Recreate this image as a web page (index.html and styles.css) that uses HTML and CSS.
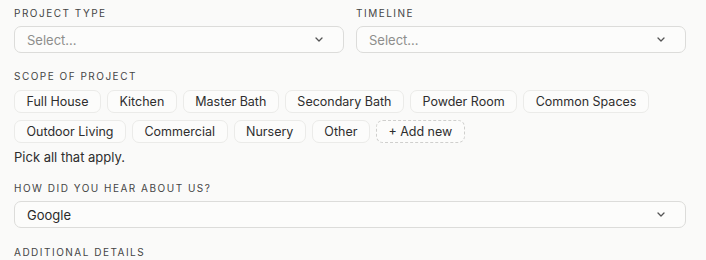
FILE: index.html
```html
<!DOCTYPE html>
<html>
<head>
<meta charset="utf-8">
<link rel="stylesheet" href="styles.css">
</head>
<body>
<div class="form">
  <div class="row2">
    <div class="field">
      <div class="label">Project Type</div>
      <div class="select placeholder"><span>Select...</span><svg class="chev" width="8" height="5" viewBox="0 0 8 5"><path d="M1 1l3 3 3-3" fill="none" stroke="#555" stroke-width="1.3" stroke-linecap="round" stroke-linejoin="round"/></svg></div>
    </div>
    <div class="field">
      <div class="label">Timeline</div>
      <div class="select placeholder"><span>Select...</span><svg class="chev" width="8" height="5" viewBox="0 0 8 5"><path d="M1 1l3 3 3-3" fill="none" stroke="#555" stroke-width="1.3" stroke-linecap="round" stroke-linejoin="round"/></svg></div>
    </div>
  </div>

  <div class="label sec">Scope of Project</div>
  <div class="chips">
    <span class="chip">Full House</span>
    <span class="chip">Kitchen</span>
    <span class="chip">Master Bath</span>
    <span class="chip">Secondary Bath</span>
    <span class="chip">Powder Room</span>
    <span class="chip">Common Spaces</span>
    <span class="chip">Outdoor Living</span>
    <span class="chip">Commercial</span>
    <span class="chip">Nursery</span>
    <span class="chip">Other</span>
    <span class="chip add">+ Add new</span>
  </div>
  <div class="hint">Pick all that apply.</div>

  <div class="label sec2">How did you hear about us?</div>
  <div class="select"><span>Google</span><svg class="chev" width="8" height="5" viewBox="0 0 8 5"><path d="M1 1l3 3 3-3" fill="none" stroke="#555" stroke-width="1.3" stroke-linecap="round" stroke-linejoin="round"/></svg></div>

  <div class="label sec3">Additional Details</div>
</div>
</body>
</html>
```
FILE: styles.css
```css
* { box-sizing: border-box; }
html, body { margin: 0; padding: 0; background: #fafaf9; }
body { font-family: Inter, "Noto Sans", sans-serif; color: #2a2a2a; }
.form { width: 672px; margin-left: 14px; padding-top: 6px; }
.row2 { display: grid; grid-template-columns: 1fr 1fr; gap: 12px; }
.label {
  font-size: 10px; line-height: 14px; letter-spacing: 1.5px;
  text-transform: uppercase; color: #454545; margin-bottom: 6px;
}
.label.sec { margin-top: 16px; margin-bottom: 7px; }
.label.sec2 { margin-top: 16px; }
.label.sec3 { margin-top: 17px; }
.select {
  height: 27px; border: 1px solid #dcdcda; border-radius: 7px;
  background: #fcfcfb; display: flex; align-items: center;
  justify-content: space-between; padding: 0 20px 0 12px;
  font-size: 13px; color: #2a2a2a;
}
.select.placeholder { color: #8e8e8c; }
.chev { display: block; }
.chips { display: flex; flex-wrap: wrap; gap: 7px 6px; }
.chip {
  height: 23px; display: inline-flex; align-items: center;
  padding: 0 11.5px; border: 1px solid #ebebe9; border-radius: 7px;
  background: #fcfcfb; font-size: 12.5px; color: #2e2e2e;
}
.chip.add { border: 1px dashed #cfcfcd; }
.hint { font-size: 13px; line-height: 16px; margin-top: 6px; color: #2e2e2e; }
```
